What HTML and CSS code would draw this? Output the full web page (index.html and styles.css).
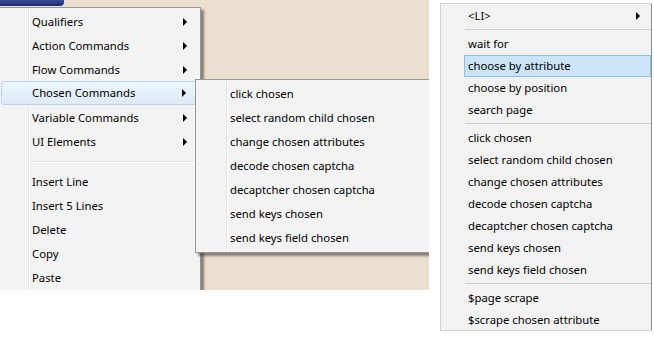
FILE: index.html
```html
<!DOCTYPE html>
<html>
<head>
<meta charset="utf-8">
<link rel="stylesheet" href="styles.css">
</head>
<body>
<div class="page">
  <div class="shot">
    <div class="titlebar"></div>
    <div class="menu main-menu">
      <div class="gutter"></div>
      <div class="item sub">Qualifiers</div>
      <div class="item sub">Action Commands</div>
      <div class="item sub">Flow Commands</div>
      <div class="item sub active">Chosen Commands</div>
      <div class="item sub">Variable Commands</div>
      <div class="item sub">UI Elements</div>
      <div class="sep"></div>
      <div class="item">Insert Line</div>
      <div class="item">Insert 5 Lines</div>
      <div class="item">Delete</div>
      <div class="item">Copy</div>
      <div class="item">Paste</div>
    </div>
    <div class="menu sub-menu">
      <div class="gutter"></div>
      <div class="item">click chosen</div>
      <div class="item">select random child chosen</div>
      <div class="item">change chosen attributes</div>
      <div class="item">decode chosen captcha</div>
      <div class="item">decaptcher chosen captcha</div>
      <div class="item">send keys chosen</div>
      <div class="item">send keys field chosen</div>
    </div>
  </div>
  <div class="ctx">
    <div class="ctx-item sub">&lt;LI&gt;</div>
    <div class="ctx-sep"></div>
    <div class="ctx-item">wait for</div>
    <div class="ctx-item hot">choose by attribute</div>
    <div class="ctx-item">choose by position</div>
    <div class="ctx-item">search page</div>
    <div class="ctx-sep"></div>
    <div class="ctx-item">click chosen</div>
    <div class="ctx-item">select random child chosen</div>
    <div class="ctx-item">change chosen attributes</div>
    <div class="ctx-item">decode chosen captcha</div>
    <div class="ctx-item">decaptcher chosen captcha</div>
    <div class="ctx-item">send keys chosen</div>
    <div class="ctx-item">send keys field chosen</div>
    <div class="ctx-sep"></div>
    <div class="ctx-item">$page scrape</div>
    <div class="ctx-item">$scrape chosen attribute</div>
  </div>
</div>
</body>
</html>
```
FILE: styles.css
```css
html, body {
  margin: 0;
  padding: 0;
  background: #ffffff;
}
body {
  width: 654px;
  height: 337px;
  overflow: hidden;
  font-family: "Noto Sans", "Open Sans", sans-serif;
  font-size: 11.3px;
  color: #000;
}
.page {
  display: flex;
  align-items: flex-start;
}
.shot {
  position: relative;
  flex: 0 0 429px;
  height: 290px;
  background: #ebdfd0;
  overflow: hidden;
}
.titlebar {
  position: absolute;
  left: 0;
  top: 0;
  width: 64px;
  height: 6px;
  background: linear-gradient(#3a4a96, #1f2c6e);
  border-radius: 0 0 4px 0;
}
.menu {
  position: absolute;
  box-sizing: border-box;
  background: #f3f3f3;
  border: 1px solid #979797;
  padding: 2px 2px 1px 2px;
  box-shadow: 3px 3px 2px rgba(60, 50, 40, 0.55);
}
.main-menu {
  left: -2px;
  top: 7px;
  width: 203px;
  height: 300px;
}
.sub-menu {
  left: 195px;
  top: 79px;
  width: 250px;
  height: 174px;
}
.gutter {
  position: absolute;
  top: 0;
  bottom: 0;
  left: 29px;
  width: 1px;
  background: #e2e3e3;
  border-right: 1px solid #ffffff;
}
.sub-menu .gutter {
  left: 30px;
}
.item {
  position: relative;
  height: 24px;
  line-height: 24px;
  padding-left: 31px;
  white-space: nowrap;
}
.sub-menu .item {
  padding-left: 32px;
}
.item.active {
  box-sizing: border-box;
  border: 1px solid #b9d5ec;
  border-radius: 3px;
  background: linear-gradient(#eef6fc, #dcebf7);
  line-height: 22px;
  padding-left: 30px;
  margin-top: -1px;
  margin-bottom: 1px;
}
.item.sub::after,
.ctx-item.sub::after {
  content: "";
  position: absolute;
  top: 50%;
  margin-top: -4px;
  border-left: 4px solid #000;
  border-top: 4px solid transparent;
  border-bottom: 4px solid transparent;
}
.item.sub::after {
  right: 11px;
}
.sep {
  position: relative;
  height: 16px;
}
.sep::after {
  content: "";
  position: absolute;
  left: 31px;
  right: 3px;
  top: 7px;
  height: 1px;
  background: #e0e0e0;
  border-bottom: 1px solid #ffffff;
}
.ctx {
  margin-left: 11px;
  margin-top: 3px;
  width: 212px;
  box-sizing: border-box;
  background: #f2f2f2;
  border: 1px solid #d0d0d0;
  border-right-color: #8e8e8e;
  padding: 1px 0 0 0;
  height: 328px;
}
.ctx-item {
  position: relative;
  height: 22px;
  line-height: 22px;
  padding-left: 27px;
  white-space: nowrap;
}
.ctx-item.sub::after {
  right: 11px;
}
.ctx-item.hot {
  box-sizing: border-box;
  margin-left: 23px;
  padding-left: 3px;
  border: 1px solid #8cc0e9;
  background: #cce4f7;
  line-height: 20px;
}
.ctx-sep {
  position: relative;
  height: 6px;
}
.ctx-sep::after {
  content: "";
  position: absolute;
  left: 24px;
  right: 0;
  top: 2px;
  height: 1px;
  background: #cfcfcf;
}
```
